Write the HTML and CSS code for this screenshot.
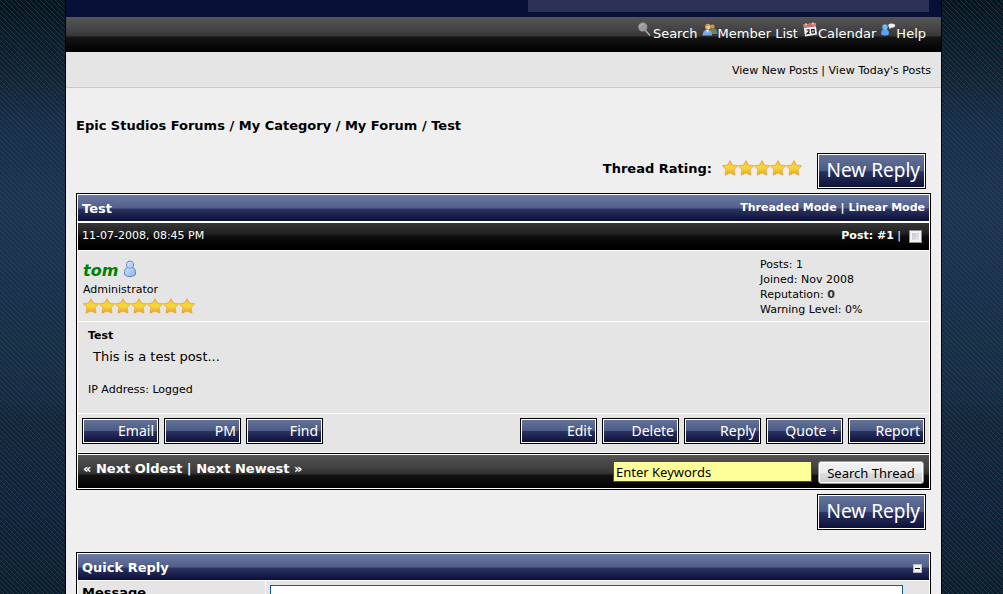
FILE: index.html
```
<!DOCTYPE html>
<html lang="en">
<head>
    <meta charset="UTF-8">
    <title>Epic Studios Forums - Test</title>
    <link rel="stylesheet" href="styles.css">
</head>
<body>
    <svg class="defs" width="0" height="0" aria-hidden="true">
        <defs>
            <linearGradient id="gold" x1="0" y1="0" x2="0" y2="1">
                <stop offset="0" stop-color="#f5b638"/>
                <stop offset="0.5" stop-color="#f7d93c"/>
                <stop offset="1" stop-color="#e8a01c"/>
            </linearGradient>
            <linearGradient id="buddy" x1="0" y1="0" x2="1" y2="1">
                <stop offset="0" stop-color="#dbe9fb"/>
                <stop offset="1" stop-color="#8fb4e6"/>
            </linearGradient>
            <symbol id="star" viewBox="0 0 16 16">
                <path d="M8 0.6 L10.4 5 L15.7 5.7 L12.1 9.6 L13 15.2 L8 13 L3 15.2 L3.9 9.6 L0.3 5.7 L5.6 5 Z" fill="url(#gold)" stroke="#dfa653" stroke-width="0.8" stroke-linejoin="round"/>
            </symbol>
        </defs>
    </svg>

    <div id="container">
        <div class="logo"><div class="logo-panel"></div></div>

        <nav class="menu">
            <a href="#">
                <svg width="16" height="16" viewBox="0 0 16 16"><path d="M8.5 8.5 L13 13.5" stroke="#aaa" stroke-width="1.6"/><circle cx="5.8" cy="5" r="4.6" fill="#999"/><path d="M2.5 5 Q3.5 2 7 2" stroke="#bbb" fill="none"/></svg>Search</a>
            <a href="#">
                <svg width="16" height="16" viewBox="0 0 16 16"><path d="M8 12 Q7 6 11 6 Q15 6 15.5 12 Z" fill="#6a8a48"/><circle cx="11" cy="3.6" r="2.9" fill="#5d4630"/><circle cx="10.6" cy="4.4" r="2" fill="#c99465"/><path d="M0.5 13.5 Q1 7.5 5 7.5 Q10 7.5 10 13.5 Z" fill="#7fa9dd"/><path d="M4 8 L5.5 11 L7 8 Z" fill="#e5eefa"/><circle cx="6" cy="4.8" r="3" fill="#c39a5c"/><circle cx="6.2" cy="5.6" r="2" fill="#efc59a"/></svg>Member List</a>
            <a href="#">
                <svg width="16" height="16" viewBox="0 0 16 16"><path d="M1.5 2.5 L13.5 1 L15 12.5 L3 14.5 Z" fill="#f4f4f4"/><path d="M1.5 2.5 L13.5 1 L14 4.5 L2 6 Z" fill="#c8706a"/><path d="M4 1 V3.5 M11 0.3 V2.8" stroke="#eee"/><path d="M4.5 8 L7 7.8 L7 9.5 L5 11.7 L7.7 11.4 M9.5 7.6 L12 7.3 L12.4 10.7 L10 11 Z" fill="none" stroke="#222" stroke-width="1.2"/></svg>Calendar</a>
            <a href="#">
                <svg width="16" height="16" viewBox="0 0 16 16"><path d="M1 12 Q1 7 5 7 Q9 7 9 12 Q8 13.5 5 13.5 Q2 13.5 1 12 Z" fill="#5aa3ee"/><circle cx="5" cy="5" r="2.7" fill="#76b7f5"/><ellipse cx="11.7" cy="3.6" rx="3.4" ry="2.2" fill="#eef2f6"/><path d="M9.5 5 L9 7 L12 5.5 Z" fill="#eef2f6"/></svg>Help</a>
        </nav>

        <div class="panel">
            <a href="#">View New Posts</a> | <a href="#">View Today's Posts</a>
        </div>

        <div class="content">
            <div class="navigation">
                <a href="#">Epic Studios Forums</a> / <a href="#">My Category</a> / <a href="#">My Forum</a> / Test
            </div>

            <div class="thread-top">
                <strong>Thread Rating:</strong>
                <span class="stars">
                    <svg><use href="#star"/></svg><svg><use href="#star"/></svg><svg><use href="#star"/></svg><svg><use href="#star"/></svg><svg><use href="#star"/></svg>
                </span>
                <button type="button" class="new-reply">New Reply</button>
            </div>

            <div class="tborder">
                <div class="thead">
                    <span>Test</span>
                    <span class="modes"><a href="#">Threaded Mode</a> | <a href="#">Linear Mode</a></span>
                </div>
                <div class="post-head">
                    <span>11-07-2008, 08:45 PM</span>
                    <span class="post-num"><label for="post1"><b>Post: <a href="#">#1</a></b> |</label><input type="checkbox" id="post1"></span>
                </div>
                <div class="author">
                    <div>
                        <div class="name"><a href="#">tom</a>
                            <svg width="14" height="18" viewBox="0 0 14 18"><path d="M1.5 14 Q1 8.5 4.5 7.5 Q3 6 3.5 3.5 Q4.5 1 7 1 Q9.5 1 10.5 3.5 Q11 6 9.5 7.5 Q13 8.5 12.5 14 Q12 16.5 7 16.5 Q2 16.5 1.5 14 Z" fill="url(#buddy)" stroke="#5f86c4"/><path d="M4.5 7.5 Q7 9 9.5 7.5" fill="none" stroke="#7d9fd3"/></svg>
                        </div>
                        <div class="usertitle">Administrator</div>
                        <span class="stars">
                            <svg><use href="#star"/></svg><svg><use href="#star"/></svg><svg><use href="#star"/></svg><svg><use href="#star"/></svg><svg><use href="#star"/></svg><svg><use href="#star"/></svg><svg><use href="#star"/></svg>
                        </span>
                    </div>
                    <div class="stats">
                        Posts: 1<br>
                        Joined: Nov 2008<br>
                        Reputation: <b>0</b><br>
                        Warning Level: <a href="#">0%</a>
                    </div>
                </div>
                <div class="post-body">
                    <div class="subject">Test</div>
                    <p>This is a test post...</p>
                    <div class="ip">IP Address: <a href="#">Logged</a></div>
                </div>
                <div class="post-buttons">
                    <button type="button">Email</button>
                    <button type="button">PM</button>
                    <button type="button">Find</button>
                    <button type="button" class="first-right">Edit</button>
                    <button type="button">Delete</button>
                    <button type="button">Reply</button>
                    <button type="button">Quote +</button>
                    <button type="button">Report</button>
                </div>
                <div class="tfoot">
                    <span>« <a href="#">Next Oldest</a> | <a href="#">Next Newest</a> »</span>
                    <form class="search-thread">
                        <input type="text" value="Enter Keywords" aria-label="Enter Keywords">
                        <button type="submit">Search Thread</button>
                    </form>
                </div>
            </div>

            <div class="thread-bottom">
                <button type="button" class="new-reply">New Reply</button>
            </div>

            <div class="tborder">
                <div class="thead">
                    <span>Quick Reply</span>
                    <button type="button" class="collapse" aria-label="Collapse"></button>
                </div>
                <div class="quick-reply">
                    <label for="message">Message</label>
                    <div class="message-cell"><textarea id="message"></textarea></div>
                </div>
            </div>
        </div>
    </div>
</body>
</html>
```
FILE: styles.css
```
* {
    box-sizing: border-box;
}
html {
    height: 100%;
}
body {
    height: 100%;
    margin: 0;
    padding: 0 61px 0 65px;
    overflow: hidden;
    font-family: Verdana, "DejaVu Sans", sans-serif;
    font-size: 13px;
    line-height: 16px;
    color: #000;
    background:
        linear-gradient(45deg, transparent 42%, rgba(24, 90, 120, 0.5) 42%, rgba(24, 90, 120, 0.5) 58%, transparent 58%) 0 0 / 5px 5px,
        linear-gradient(#0b131b 0, #0e1a25 30px, #152231 75px, #1b2c46 120px, #20324e 200px, #1f304c 270px, #1b2e44 340px, #1a2a42 390px, #162636 420px, #152238 500px, #101e2b 594px);
}
a {
    color: inherit;
    text-decoration: none;
}
button, input, textarea {
    font-family: "Noto Sans", "Open Sans", sans-serif;
    margin: 0;
}
button {
    cursor: pointer;
}
.defs {
    position: absolute;
}
#container {
    background: #efefef;
    border: 1px solid #000;
    border-width: 0 1px;
    min-height: 100%;
}
.logo {
    height: 17px;
    padding: 0 12px 5px;
    background: #071036;
}
.logo-panel {
    width: 401px;
    height: 12px;
    margin-left: auto;
    background: #2b3156;
}
.menu {
    display: flex;
    justify-content: flex-end;
    gap: 4px;
    height: 35px;
    padding: 5px 15px 0 0;
    color: #fff;
    background: linear-gradient(#555 0, #444 12px, #363636 19px, #161616 20px, #000 34px);
}
.menu a {
    display: flex;
    line-height: 24px;
}
.panel {
    height: 36px;
    padding: 11px 10px 0;
    font-size: 11px;
    text-align: right;
    background: #e5e5e5;
    border-bottom: 1px solid #c8c9d6;
}
.content {
    padding: 30px 10px 0;
}
.navigation {
    font-weight: bold;
}
.thread-top {
    display: flex;
    justify-content: flex-end;
    align-items: flex-start;
    padding: 19px 5px 4px 0;
}
.thread-top strong {
    margin-top: 8px;
}
.stars {
    display: flex;
}
.stars svg {
    width: 16px;
    height: 16px;
}
.thread-top .stars {
    margin: 7px 15px 0 10px;
}
.new-reply {
    display: block;
    width: 109px;
    height: 36px;
    padding: 0 5px 2px;
    font-size: 19px;
    line-height: 30px;
    text-align: right;
    white-space: nowrap;
}
.new-reply, .post-buttons button {
    color: #fff;
    border: 1px solid #000;
    box-shadow: inset 0 0 0 1px #fff;
    background: linear-gradient(#66759c 0, #4d5b84 48%, #2b3260 52%, #0a0f38 100%);
}
.tborder {
    padding: 1px;
    background: #fff;
    border: 1px solid #000;
}
.thead {
    display: flex;
    justify-content: space-between;
    height: 26px;
    padding: 6px 4px 0;
    color: #fff;
    font-weight: bold;
    background: linear-gradient(#6c7ba3 0, #515f88 13px, #2d3462 14px, #0a0f38 26px);
}
.modes {
    font-size: 11px;
    line-height: 14px;
}
.post-head {
    display: flex;
    justify-content: space-between;
    height: 27px;
    margin: 2px 0 1px;
    padding: 5px 7px 0 4px;
    font-size: 11px;
    color: #fff;
    background: linear-gradient(#353535 0, #222 10px, #0c0c0c 14px, #000 24px);
}
.post-num {
    display: flex;
}
.post-num input {
    appearance: none;
    width: 13px;
    height: 13px;
    margin: 2px 0 0 8px;
    border: 1px solid #8e8f8f;
    outline: 0;
    box-shadow: inset 0 0 0 2px #f4f4f4;
    background: linear-gradient(135deg, #b9bfcb, #f2f2f2);
}
.author {
    display: flex;
    justify-content: space-between;
    height: 70px;
    padding: 6px 5px 0;
    font-size: 11px;
    background: #e5e5e5;
}
.name {
    display: flex;
    gap: 5px;
    height: 25px;
    font-size: 16px;
    line-height: 28px;
    font-weight: bold;
    font-style: italic;
    color: #008000;
}
.name svg {
    margin-top: 3px;
}
.stats {
    width: 164px;
    line-height: 15px;
}
.stats b {
    color: #333;
}
.post-body {
    height: 91px;
    margin: 1px 0;
    padding: 6px 10px 0;
    font-size: 11px;
    background: #e5e5e5;
}
.subject {
    font-weight: bold;
}
.post-body p {
    margin: 5px 5px 17px;
    font-size: 13px;
}
.post-buttons {
    display: flex;
    gap: 5px;
    height: 38px;
    padding: 4px;
    background: #e5e5e5;
}
.post-buttons button {
    width: 77px;
    height: 26px;
    padding: 0 4px;
    font-size: 14px;
    line-height: 22px;
    text-align: right;
    white-space: nowrap;
}
.post-buttons .first-right {
    margin-left: auto;
}
.tfoot {
    display: flex;
    justify-content: space-between;
    height: 35px;
    margin-top: 1px;
    padding: 7px 5px 0;
    color: #fff;
    font-weight: bold;
    border-top: 1px solid #000;
    box-shadow: inset 0 1px 0 #fff;
    background: linear-gradient(#555 0, #404040 14px, #303030 20px, #141414 21px, #000 34px);
}
.search-thread {
    display: flex;
    gap: 6px;
}
.search-thread input {
    width: 199px;
    height: 21px;
    padding: 0 2px;
    font-size: 13px;
    color: #000;
    background: #ffff99;
    border: 1px solid #0f5c8e;
}
.search-thread button {
    width: 106px;
    height: 23px;
    padding: 0;
    font-size: 13px;
    line-height: 20px;
    color: #000;
    border: 1px solid #9a9a9a;
    border-radius: 3px;
    box-shadow: inset 0 0 0 1px #fff;
    background: linear-gradient(#f2f2f2, #ebebeb 50%, #dddddf 50%, #cdced3);
}
.thread-bottom {
    display: flex;
    justify-content: flex-end;
    padding: 4px 5px 22px 0;
}
.collapse {
    width: 9px;
    height: 9px;
    margin: 4px 3px 0 0;
    padding: 0;
    border: 1px solid #bbb;
    background: linear-gradient(#000, #000) center / 5px 1px no-repeat #f0f0f0;
}
.quick-reply {
    display: grid;
    grid-template-columns: 22% 1fr;
    gap: 1px;
    margin-top: 1px;
    font-weight: bold;
}
.quick-reply label, .message-cell {
    padding: 4px;
    background: #e5e5e5;
}
.message-cell {
    padding-right: 26px;
}
.message-cell textarea {
    display: block;
    width: 100%;
    height: 130px;
    border: 1px solid #0f5c8e;
    background: #fff;
    resize: none;
}
```
